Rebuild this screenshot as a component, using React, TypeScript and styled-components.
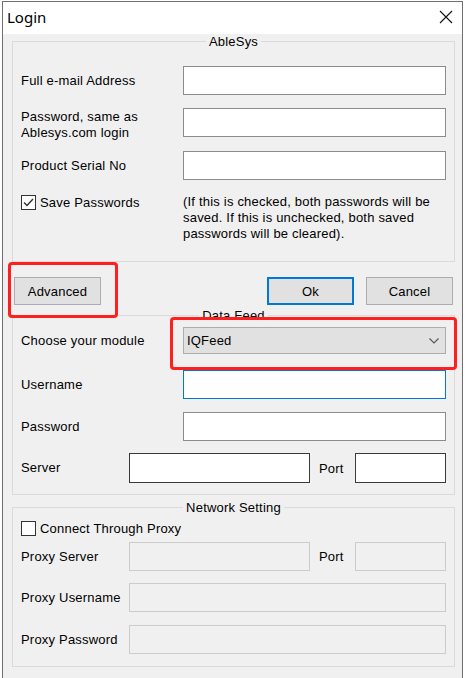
import React from 'react';
import styled, { createGlobalStyle } from 'styled-components';

const GlobalStyle = createGlobalStyle`
  html, body {
    margin: 0;
    padding: 0;
    background: #ffffff;
    overflow: hidden;
  }
  * {
    box-sizing: border-box;
  }
`;

const Window = styled.div`
  position: relative;
  margin: 1px 0 0 2px;
  width: 461px;
  min-height: 677px;
  border: 1px solid #6f6f6f;
  border-bottom: none;
  background: #f0f0f0;
  font-family: 'Liberation Sans', Arial, sans-serif;
  font-size: 13px;
  letter-spacing: 0.2px;
  color: #000;
`;

const TitleBar = styled.div`
  height: 32px;
  background: #fff;
  display: flex;
  align-items: center;
  justify-content: space-between;
  padding: 0 9px 2px 4px;
`;

const Title = styled.span`
  font-family: 'Noto Sans', 'Open Sans', sans-serif;
  font-size: 15px;
  letter-spacing: 0;
`;

const Body = styled.div`
  padding: 0 7px 0 9px;
`;

const Group = styled.fieldset<{ $pt: number; $pb: number; $mt?: number }>`
  margin: ${p => p.$mt || 0}px 0 0 0;
  padding: ${p => p.$pt}px 8px ${p => p.$pb}px 8px;
  border: 1px solid #dadada;
  min-width: 0;
`;

const Legend = styled.legend`
  margin: 0 auto;
  padding: 0 3px;
  line-height: 15px;
  font-size: 13px;
`;

const Row = styled.div<{ $mt?: number; $h?: number }>`
  display: flex;
  align-items: center;
  margin-top: ${p => p.$mt || 0}px;
  height: ${p => p.$h || 29}px;
`;

const Label = styled.div<{ $w?: number }>`
  flex: 0 0 ${p => p.$w || 162}px;
  line-height: 16px;
  white-space: nowrap;
`;

const TallLabel = styled(Label)`
  align-self: flex-start;
  padding-top: 1px;
  height: 33px;
  overflow: hidden;
`;

const Input = styled.div<{ $tone?: 'normal' | 'focus' | 'dark' | 'off'; $w?: number }>`
  height: 100%;
  ${p => (p.$w ? `flex: 0 0 ${p.$w}px;` : 'flex: 1;')}
  background: ${p => (p.$tone === 'off' ? '#f0f0f0' : '#fff')};
  border: 1px solid
    ${p =>
      p.$tone === 'focus'
        ? '#0078d7'
        : p.$tone === 'dark'
        ? '#3a3a3a'
        : p.$tone === 'off'
        ? '#cccccc'
        : '#8c8c8c'};
`;

const PortLabel = styled.div`
  flex: 0 0 45px;
  padding-left: 9px;
`;

const CheckRow = styled.div<{ $mt?: number }>`
  display: flex;
  align-items: flex-start;
  margin-top: ${p => p.$mt || 0}px;
`;

const CheckLabel = styled.label<{ $w?: number }>`
  display: flex;
  align-items: center;
  gap: 4px;
  flex: 0 0 ${p => (p.$w ? `${p.$w}px` : 'auto')};
  height: 15px;
  margin-top: 1px;
  line-height: 15px;
  white-space: nowrap;
`;

const Box = styled.span`
  width: 15px;
  height: 15px;
  border: 1px solid #333;
  background: #fff;
  display: flex;
  align-items: center;
  justify-content: center;
`;

const Note = styled.div`
  line-height: 16px;
  white-space: nowrap;
`;

const ButtonBar = styled.div`
  display: flex;
  gap: 12px;
  margin: 15px 2px 0 2px;
`;

const Spacer = styled.div`
  flex: 1;
`;

const Button = styled.button<{ $primary?: boolean }>`
  width: 87px;
  height: 28px;
  background: #e1e1e1;
  border: ${p => (p.$primary ? '2px solid #0078d7' : '1px solid #adadad')};
  font-family: 'Liberation Sans', Arial, sans-serif;
  font-size: 13px;
  letter-spacing: 0.2px;
  color: #000;
  padding: 0;
`;

const Select = styled.div`
  flex: 1;
  height: 27px;
  display: flex;
  align-items: center;
  justify-content: space-between;
  background: #e1e1e1;
  border: 1px solid #adadad;
  padding: 0 6px 0 3px;
`;

const Marker = styled.div<{ $l: number; $t: number; $w: number; $h: number }>`
  position: absolute;
  left: ${p => p.$l}px;
  top: ${p => p.$t}px;
  width: ${p => p.$w}px;
  height: ${p => p.$h}px;
  border: 3px solid #ff1f1f;
  border-radius: 4px;
  pointer-events: none;
`;

const CloseIcon = () => (
  <svg width="14" height="14" viewBox="0 0 14 14">
    <path d="M1 1 L13 13 M13 1 L1 13" stroke="#111" strokeWidth="1.1" fill="none" />
  </svg>
);

const CheckIcon = () => (
  <svg width="11" height="9" viewBox="0 0 11 9">
    <path d="M1 4.5 L4 7.5 L10 1" stroke="#333" strokeWidth="1.4" fill="none" />
  </svg>
);

const Chevron = () => (
  <svg width="10" height="6" viewBox="0 0 10 6">
    <path d="M0.5 0.5 L5 5 L9.5 0.5" stroke="#555" strokeWidth="1.1" fill="none" />
  </svg>
);

const Checkbox: React.FC<{ checked?: boolean; text: string; w?: number }> = ({ checked, text, w }) => (
  <CheckLabel $w={w}>
    <Box>{checked && <CheckIcon />}</Box>
    {text}
  </CheckLabel>
);

const App: React.FC = () => {
  return (
    <>
      <GlobalStyle />
      <Window>
        <TitleBar>
          <Title>Login</Title>
          <CloseIcon />
        </TitleBar>
        <Body>
          <Group $pt={17} $pb={19}>
            <Legend>AbleSys</Legend>
            <Row>
              <Label>Full e-mail Address</Label>
              <Input />
            </Row>
            <Row $mt={13}>
              <TallLabel>
                Password, same as
                <br />
                Ablesys.com login
              </TallLabel>
              <Input />
            </Row>
            <Row $mt={14}>
              <Label>Product Serial No</Label>
              <Input />
            </Row>
            <CheckRow $mt={14}>
              <Checkbox checked text="Save Passwords" w={162} />
              <Note>
                (If this is checked, both passwords will be
                <br />
                saved. If this is unchecked, both saved
                <br />
                passwords will be cleared).
              </Note>
            </CheckRow>
          </Group>

          <ButtonBar>
            <Button>Advanced</Button>
            <Spacer />
            <Button $primary>Ok</Button>
            <Button>Cancel</Button>
          </ButtonBar>

          <Group $pt={4} $pb={11} $mt={3}>
            <Legend>Data Feed</Legend>
            <Row $h={27}>
              <Label>Choose your module</Label>
              <Select>
                IQFeed
                <Chevron />
              </Select>
            </Row>
            <Row $mt={16}>
              <Label>Username</Label>
              <Input $tone="focus" />
            </Row>
            <Row $mt={13}>
              <Label>Password</Label>
              <Input />
            </Row>
            <Row $mt={12} $h={30}>
              <Label $w={108}>Server</Label>
              <Input $tone="dark" $w={181} />
              <PortLabel>Port</PortLabel>
              <Input $tone="dark" />
            </Row>
          </Group>

          <Group $pt={5} $pb={12} $mt={5}>
            <Legend>Network Setting</Legend>
            <CheckRow>
              <Checkbox text="Connect Through Proxy" />
            </CheckRow>
            <Row $mt={6}>
              <Label $w={108}>Proxy Server</Label>
              <Input $tone="off" $w={181} />
              <PortLabel>Port</PortLabel>
              <Input $tone="off" />
            </Row>
            <Row $mt={12}>
              <Label $w={108}>Proxy Username</Label>
              <Input $tone="off" />
            </Row>
            <Row $mt={13}>
              <Label $w={108}>Proxy Password</Label>
              <Input $tone="off" />
            </Row>
          </Group>
        </Body>

        <Marker $l={5} $t={260} $w={110} $h={56} />
        <Marker $l={167} $t={315} $w={287} $h={53} />
      </Window>
    </>
  );
};

export default App;
